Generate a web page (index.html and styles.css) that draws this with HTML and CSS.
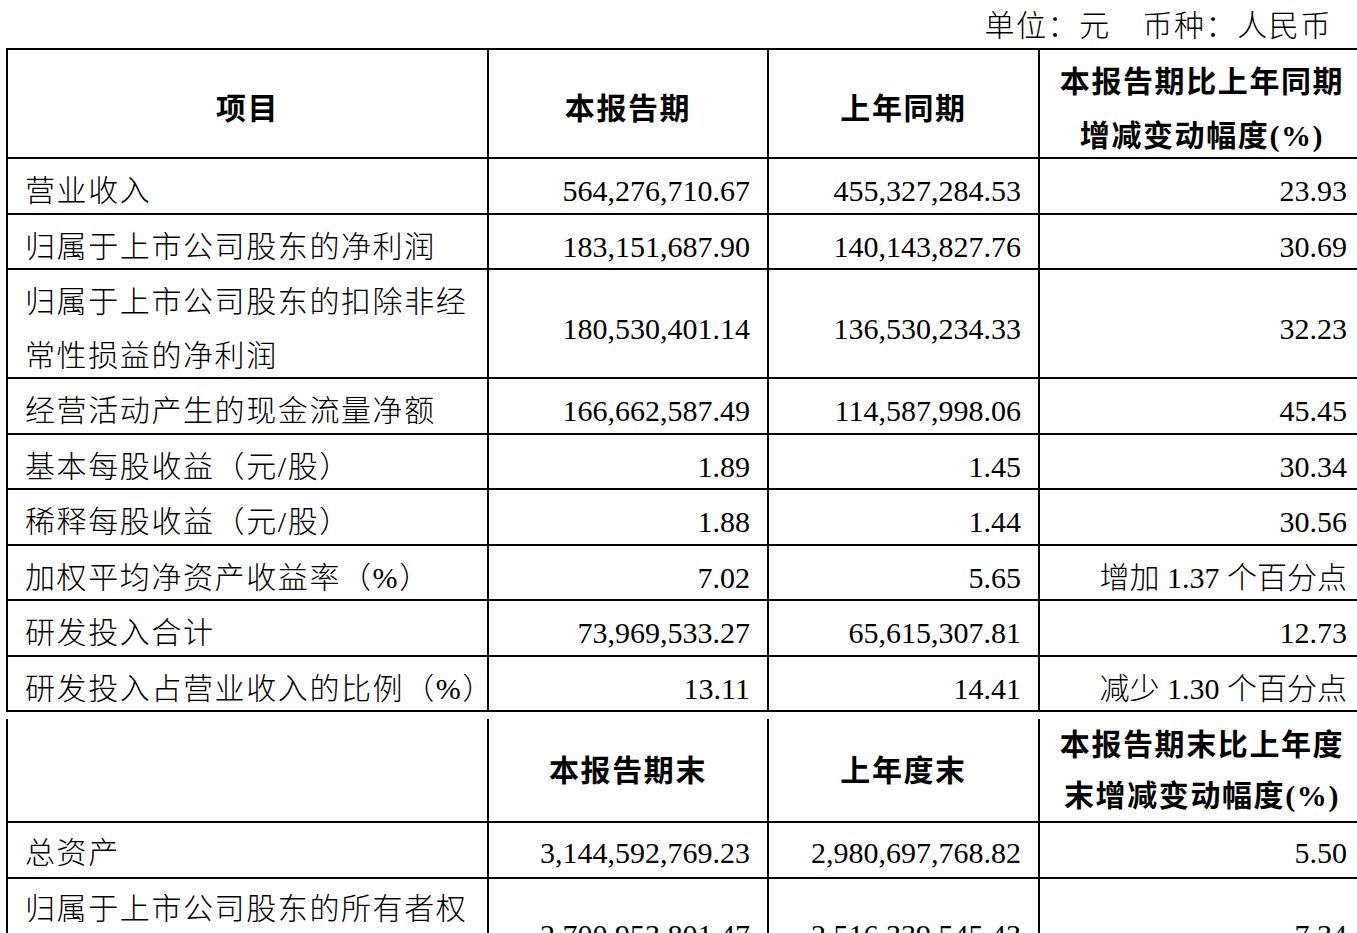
FILE: index.html
```html
<!DOCTYPE html>
<html lang="zh-CN">
<head>
<meta charset="utf-8">
<title>主要会计数据</title>
<link rel="stylesheet" href="styles.css">
</head>
<body>
<div class="page">
  <div class="unit">单位：元　币种：人民币</div>
  <table class="tbl t1">
    <colgroup><col class="w1"><col class="w2"><col class="w3"><col class="w4"></colgroup>
    <tr class="head">
      <td class="ctr"><div class="c">项目</div></td>
      <td class="ctr"><div class="c">本报告期</div></td>
      <td class="ctr"><div class="c">上年同期</div></td>
      <td class="ctr"><div class="c">本报告期比上年同期<br>增减变动幅度(%)</div></td>
    </tr>
    <tr>
      <td class="lbl"><div class="c">营业收入</div></td>
      <td class="num"><div class="c">564,276,710.67</div></td>
      <td class="num"><div class="c">455,327,284.53</div></td>
      <td class="num"><div class="c">23.93</div></td>
    </tr>
    <tr>
      <td class="lbl"><div class="c">归属于上市公司股东的净利润</div></td>
      <td class="num"><div class="c">183,151,687.90</div></td>
      <td class="num"><div class="c">140,143,827.76</div></td>
      <td class="num"><div class="c">30.69</div></td>
    </tr>
    <tr>
      <td class="lbl"><div class="c">归属于上市公司股东的扣除非经<br>常性损益的净利润</div></td>
      <td class="num"><div class="c">180,530,401.14</div></td>
      <td class="num"><div class="c">136,530,234.33</div></td>
      <td class="num"><div class="c">32.23</div></td>
    </tr>
    <tr>
      <td class="lbl"><div class="c">经营活动产生的现金流量净额</div></td>
      <td class="num"><div class="c">166,662,587.49</div></td>
      <td class="num"><div class="c">114,587,998.06</div></td>
      <td class="num"><div class="c">45.45</div></td>
    </tr>
    <tr>
      <td class="lbl"><div class="c">基本每股收益（元/股）</div></td>
      <td class="num"><div class="c">1.89</div></td>
      <td class="num"><div class="c">1.45</div></td>
      <td class="num"><div class="c">30.34</div></td>
    </tr>
    <tr>
      <td class="lbl"><div class="c">稀释每股收益（元/股）</div></td>
      <td class="num"><div class="c">1.88</div></td>
      <td class="num"><div class="c">1.44</div></td>
      <td class="num"><div class="c">30.56</div></td>
    </tr>
    <tr>
      <td class="lbl"><div class="c">加权平均净资产收益率（%）</div></td>
      <td class="num"><div class="c">7.02</div></td>
      <td class="num"><div class="c">5.65</div></td>
      <td class="num"><div class="c cjk">增加 1.37 个百分点</div></td>
    </tr>
    <tr>
      <td class="lbl"><div class="c">研发投入合计</div></td>
      <td class="num"><div class="c">73,969,533.27</div></td>
      <td class="num"><div class="c">65,615,307.81</div></td>
      <td class="num"><div class="c">12.73</div></td>
    </tr>
    <tr>
      <td class="lbl"><div class="c">研发投入占营业收入的比例（%）</div></td>
      <td class="num"><div class="c">13.11</div></td>
      <td class="num"><div class="c">14.41</div></td>
      <td class="num"><div class="c cjk">减少 1.30 个百分点</div></td>
    </tr>
  </table>

  <table class="tbl t2">
    <colgroup><col class="w1"><col class="w2"><col class="w3"><col class="w4"></colgroup>
    <tr class="head">
      <td class="ctr"><div class="c"></div></td>
      <td class="ctr"><div class="c">本报告期末</div></td>
      <td class="ctr"><div class="c">上年度末</div></td>
      <td class="ctr"><div class="c">本报告期末比上年度<br>末增减变动幅度(%)</div></td>
    </tr>
    <tr>
      <td class="lbl"><div class="c">总资产</div></td>
      <td class="num"><div class="c">3,144,592,769.23</div></td>
      <td class="num"><div class="c">2,980,697,768.82</div></td>
      <td class="num"><div class="c">5.50</div></td>
    </tr>
    <tr>
      <td class="lbl"><div class="c">归属于上市公司股东的所有者权<br>益</div></td>
      <td class="num"><div class="c">2,700,953,801.47</div></td>
      <td class="num"><div class="c">2,516,339,545.43</div></td>
      <td class="num"><div class="c">7.34</div></td>
    </tr>
  </table>
</div>
</body>
</html>
```

FILE: styles.css
```css
html, body {
  margin: 0;
  padding: 0;
  overflow: hidden;
  background: #ffffff;
}

body {
  font-family: "Liberation Serif", "Noto Sans CJK SC", serif;
  font-size: 30px;
  font-weight: 300;
  color: #000000;
}

.page {
  width: 1400px;
  padding-left: 6px;
}

.unit {
  width: 1326px;
  height: 48px;
  line-height: 52px;
  text-align: right;
  letter-spacing: 1.6px;
  white-space: nowrap;
}

.tbl {
  width: 1358px;
  table-layout: fixed;
  border-collapse: collapse;
}

.w1 { width: 481px; }
.w2 { width: 280px; }
.w3 { width: 271px; }
.w4 { width: 326px; }

.tbl td {
  border: 2px solid #000000;
  padding: 0 17px;
  line-height: 53.5px;
  vertical-align: middle;
  white-space: nowrap;
}

.tbl .c {
  margin: 5px 0 -5px;
}

.lbl {
  text-align: left;
  letter-spacing: 1.6px;
}

.num {
  text-align: right;
}

.cjk {
  letter-spacing: 0;
}

.ctr {
  text-align: center;
  font-weight: bold;
  letter-spacing: 1.6px;
}

.t2 {
  margin-top: 7px;
}

.t2 .head td {
  border-top: 0;
  line-height: 51px;
}

.t2 .head .c {
  margin: 0;
}

.t2 .c {
  margin: 3px 0 -3px;
}
```
